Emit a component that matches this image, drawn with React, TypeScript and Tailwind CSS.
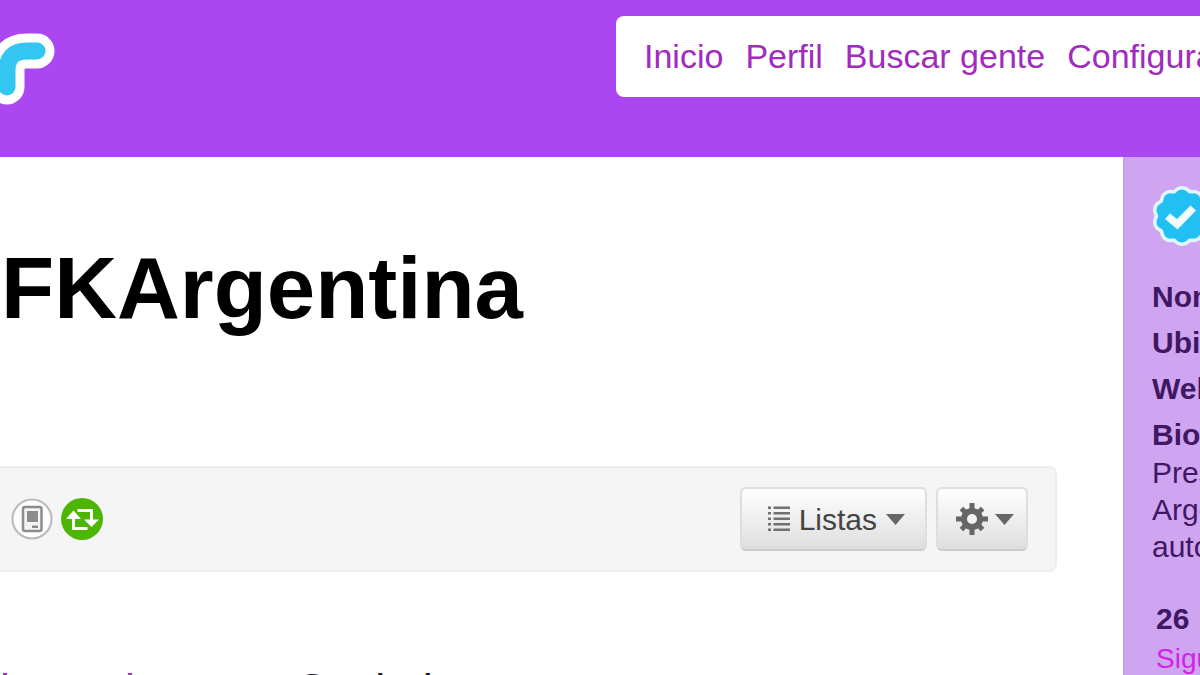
import React from "react";

const navLinks = ["Inicio", "Perfil", "Buscar gente", "Configuración"];
const profileFields = ["Nombre", "Ubicación", "Web", "Biografía"];
const bioLines = ["Presidenta", "Argentina", "autoridad"];

function Logo() {
  const stroke = "M7 87V71Q7 51 27 51H37";
  return (
    <svg className="h-[110px] w-[60px] shrink-0" viewBox="0 0 60 110" fill="none" strokeLinecap="round" aria-hidden="true">
      <path d={stroke} stroke="#ffffff" strokeWidth="35" />
      <path d={stroke} stroke="#33c6f1" strokeWidth="17" />
    </svg>
  );
}

function VerifiedBadge() {
  const petals = Array.from({ length: 10 }, (_, i) => {
    const angle = (i * Math.PI) / 5 - Math.PI / 2;
    return { x: 30 + 19.5 * Math.cos(angle), y: 30 + 19.5 * Math.sin(angle) };
  });
  return (
    <svg className="h-[60px] w-[60px] shrink-0" viewBox="0 0 60 60" role="img" aria-label="Cuenta verificada">
      <g fill="#e2f6ff">
        <circle cx="30" cy="30" r="27.500" />
        {petals.map((p, i) => (
          <circle key={i} cx={p.x} cy={p.y} r="10.5" />
        ))}
      </g>
      <g fill="#22bff3">
        <circle cx="30" cy="30" r="24" />
        {petals.map((p, i) => (
          <circle key={i} cx={p.x} cy={p.y} r="7" />
        ))}
      </g>
      <path d="M13 33 18 27.500 25 33 38.500 19.500 44 24.500 25.500 43.500Z" fill="#effbff" />
    </svg>
  );
}

function PhoneIcon() {
  return (
    <svg className="h-[42px] w-[42px]" viewBox="0 0 42 42" aria-hidden="true">
      <circle cx="21" cy="21" r="19.500" fill="#fdfdfd" stroke="#b9b9b9" strokeWidth="2" />
      <rect x="12" y="9" width="18.500" height="24" rx="2" fill="#f4f4f4" stroke="#8c8c8c" strokeWidth="2.500" />
      <rect x="16" y="13" width="11" height="11" fill="#8c8c8c" />
      <rect x="21" y="27.500" width="6" height="2.500" fill="#8c8c8c" />
    </svg>
  );
}

function RetweetIcon() {
  return (
    <svg className="h-[42px] w-[42px]" viewBox="0 0 42 42" aria-hidden="true">
      <circle cx="21" cy="21" r="21" fill="#4db605" />
      <g fill="none" stroke="#ffffff" strokeWidth="3">
        <path d="M12.500 19V30.500H26.500" />
        <path d="M16.500 12.500H30.500V23" />
      </g>
      <path d="M5 21 12.500 12.500 20 21Z" fill="#ffffff" />
      <path d="M23 21.500H38L30.500 29Z" fill="#ffffff" />
    </svg>
  );
}

function ListIcon() {
  return (
    <svg className="h-[26px] w-[22px]" viewBox="0 0 22 26" fill="#707070" aria-hidden="true">
      {[0.5, 6, 11.5, 17, 22.5].map((y) => (
        <g key={y}>
          <rect x="0" y={y} width="3" height="2.500" />
          <rect x="5.500" y={y} width="16.500" height="2.500" />
        </g>
      ))}
    </svg>
  );
}

function GearIcon() {
  return (
    <svg className="h-8 w-8" viewBox="0 0 32 32" aria-hidden="true">
      <g fill="#666666">
        {[0, 45, 90, 135].map((a) => (
          <rect key={a} x="13.500" y={a % 90 === 0 ? 0 : 1} width="5" height={a % 90 === 0 ? 32 : 30} transform={`rotate(${a} 16 16)`} />
        ))}
        <circle cx="16" cy="16" r="11" />
      </g>
      <circle cx="16" cy="16" r="5" fill="#f3f3f3" />
    </svg>
  );
}

function Caret() {
  return (
    <svg className="h-[11px] w-[19px]" viewBox="0 0 19 11" fill="#666666" aria-hidden="true">
      <path d="M0 0H19L9.500 11Z" />
    </svg>
  );
}

const buttonStyle =
  "flex h-16 items-center rounded-md border-2 border-[#dedede] border-b-[#cccccc] bg-linear-to-b from-white to-[#dedede] text-[30px] text-[#444444]";

export default function App() {
  return (
    <div className="flex h-screen flex-col overflow-hidden bg-white font-['Liberation_Sans',Arial,sans-serif]">
      <header className="flex h-[157px] shrink-0 items-start bg-[#aa47f0]">
        <Logo />
        <nav className="mt-4 ml-auto flex h-[81px] w-[584px] items-center gap-[22px] overflow-hidden rounded-l-lg bg-white pl-7 text-[34px] whitespace-nowrap text-[#a02bbd]">
          {navLinks.map((label) => (
            <a key={label} href="#">
              {label}
            </a>
          ))}
        </nav>
      </header>

      <div className="flex min-h-0 flex-1">
        <main className="min-w-0 flex-1 overflow-hidden pt-[87px]">
          <h1 className="pl-px text-[87px] leading-[88px] font-bold text-black">FKArgentina</h1>

          <div className="mt-[134px] mr-[66px] flex h-[106px] items-center rounded-r-lg border-2 border-l-0 border-[#ededed] bg-[#f5f5f5] pr-[27px] pl-[11px]">
            <div className="flex gap-2">
              <PhoneIcon />
              <RetweetIcon />
            </div>
            <div className="ml-auto flex gap-[9px]">
              <button type="button" className={`${buttonStyle} gap-[9px] pr-5 pl-[26px]`}>
                <ListIcon />
                Listas
                <Caret />
              </button>
              <button type="button" aria-label="Opciones" className={`${buttonStyle} gap-[7px] pr-3 pl-[18px]`}>
                <GearIcon />
                <Caret />
              </button>
            </div>
          </div>

          <p className="mt-[91px] flex gap-[95px] text-[45px] leading-[54px] whitespace-nowrap text-[#22182c]">
            <a href="#" className="text-[#a02bbd]">
              la cordura
            </a>
            <span>Casi el</span>
          </p>
        </main>

        <aside className="w-[77px] shrink-0 overflow-hidden border-l-2 border-[#c3a0e8] bg-[#cfa5f2] pt-[29px] pl-[27px] text-[30px] leading-[37px] whitespace-nowrap text-[#3f1763]">
          <VerifiedBadge />
          <ul className="mt-8 flex flex-col gap-[9px] font-bold">
            {profileFields.map((field) => (
              <li key={field}>{field}</li>
            ))}
          </ul>
          <p className="mt-px">
            {bioLines.map((line) => (
              <span key={line} className="block">
                {line}
              </span>
            ))}
          </p>
          <div className="mt-[35px] pl-1">
            <strong className="block">26</strong>
            <a href="#" className="mt-[3px] block text-[28px] text-[#d322e6]">
              Siguiendo
            </a>
          </div>
        </aside>
      </div>
    </div>
  );
}
